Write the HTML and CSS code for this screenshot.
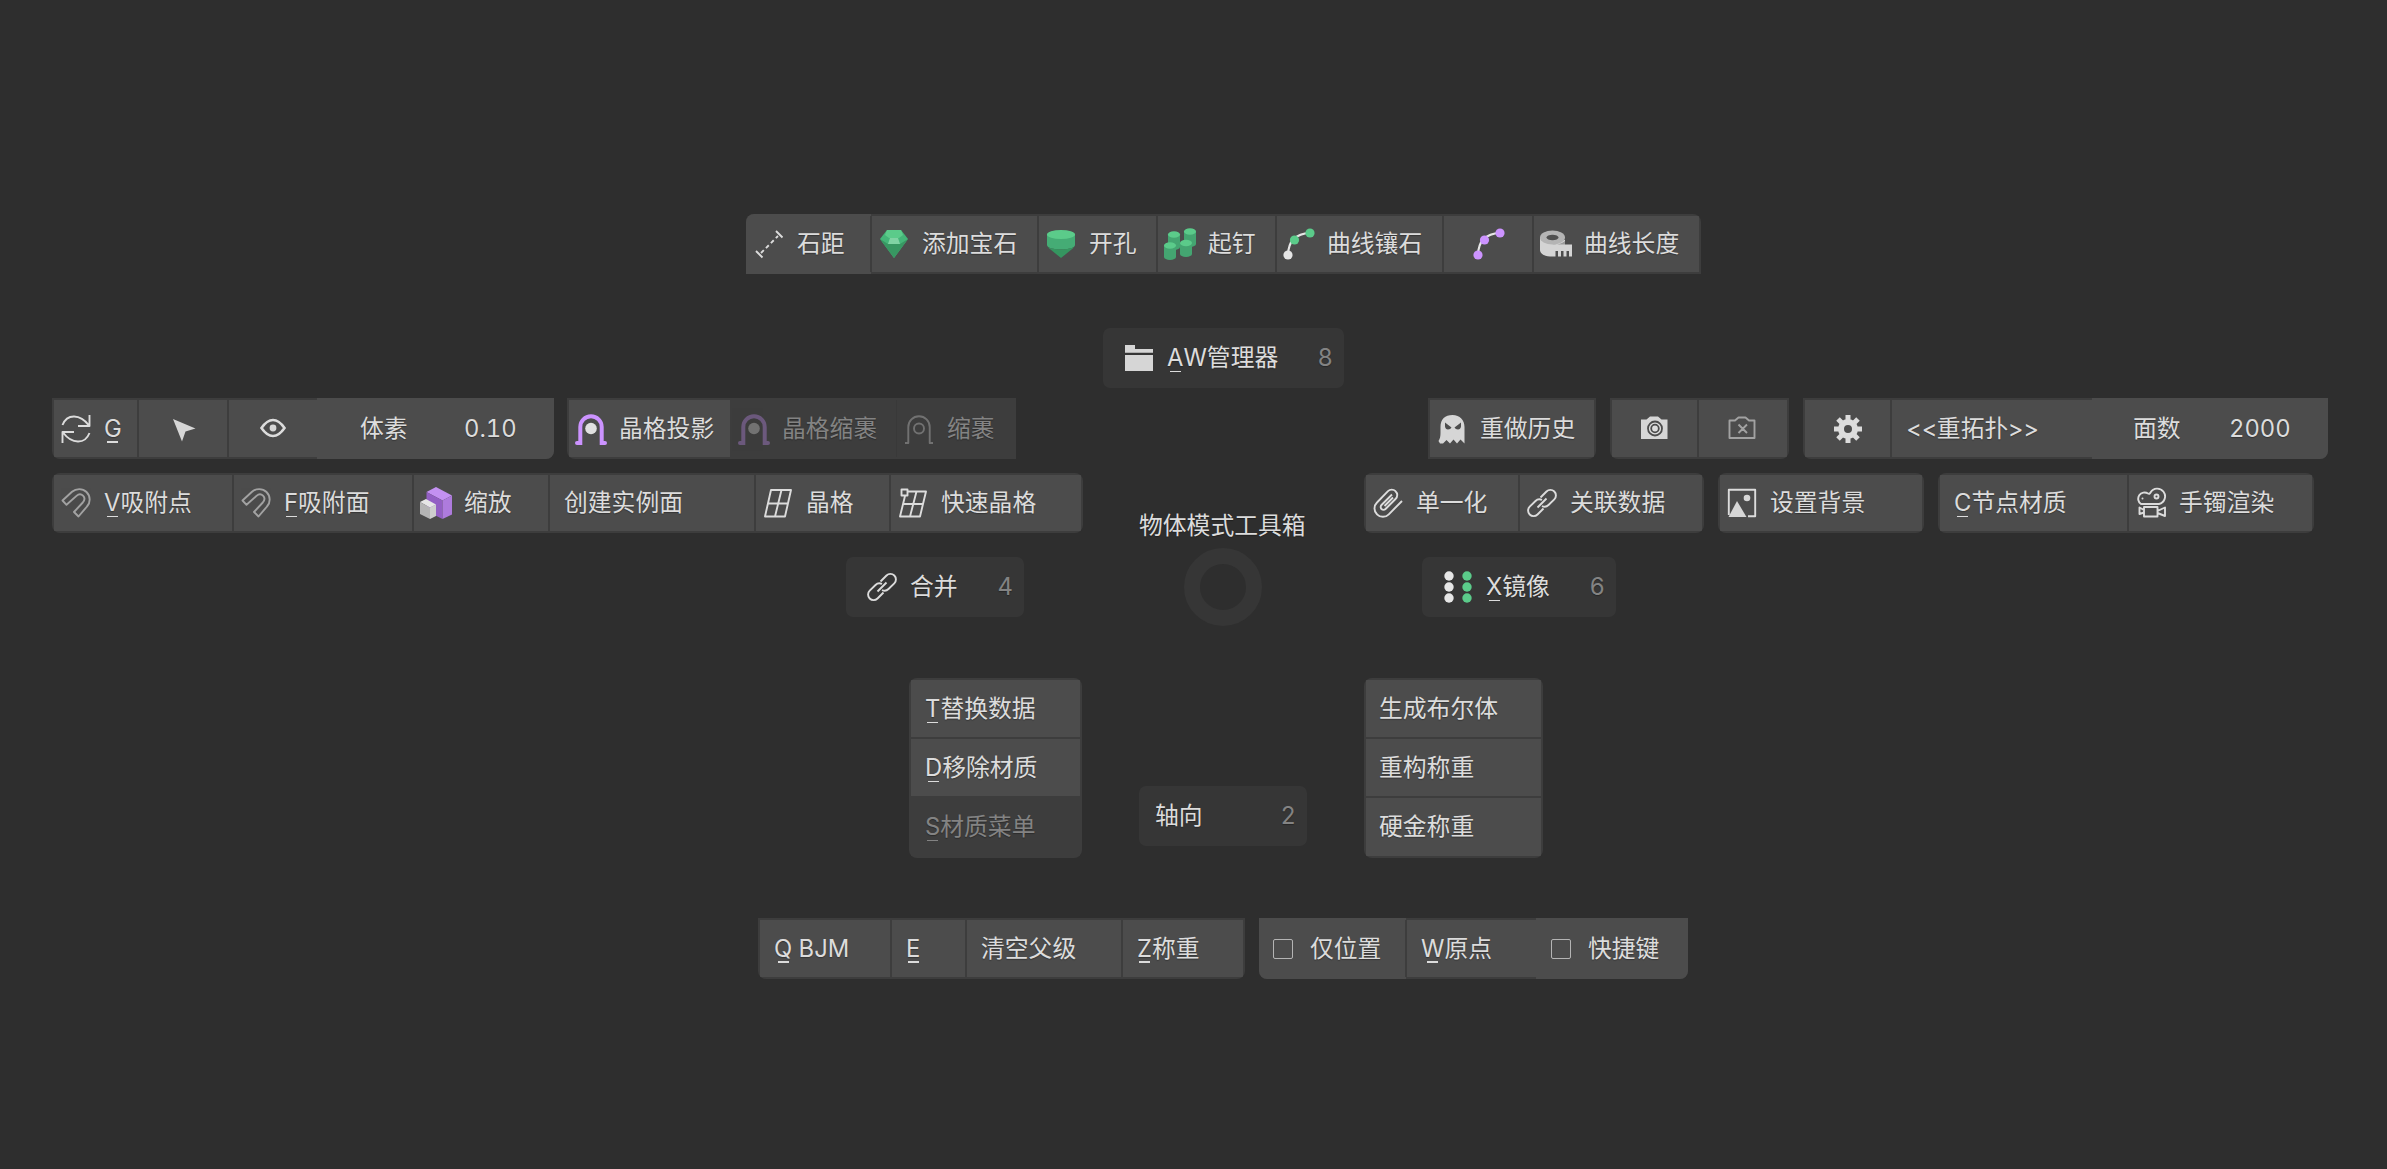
FILE: index.html
```html
<!DOCTYPE html>
<html lang="zh-CN">
<head>
<meta charset="utf-8">
<title>物体模式工具箱</title>
<link rel="stylesheet" href="styles.css">
</head>
<body>
<svg class="defs" width="0" height="0" aria-hidden="true">
  <symbol id="arch" viewBox="0 0 32 32"><path d="M2 30H5.3V14a10.7 10.7 0 0 1 21.400 0V30H30"/></symbol>
  <symbol id="magnet" viewBox="0 0 32 32"><path d="M2.500 13.500 12 4.800C16 1.300 22.500 1 26.500 5c4 4 4.200 10.500 .5 14.500L18.500 29.500 14 25l8.800-9.500c2-2.300 2-5 .2-6.800s-4.500-1.600-6.500.2L6.500 17.800Z"/></symbol>
  <symbol id="link" viewBox="0 0 32 32"><path d="M14.500 10.500 20.500 4.500a5.500 5.500 0 0 1 7.800 0a5.500 5.500 0 0 1 0 7.800L22.500 18a5.500 5.500 0 0 1-6.500 1M17.500 21.500 11.500 27.500a5.500 5.500 0 0 1-7.800 0a5.500 5.500 0 0 1 0-7.800L9.500 14a5.500 5.500 0 0 1 6.500-1M11.500 20.500 20.500 11.500"/></symbol>
</svg>

<main class="pie">
  <div class="row row-gems">
    <div class="bar bar-top">
      <div class="cell flush w-distance"><svg class="icon" viewBox="0 0 32 32"><path class="line" d="M3 23 9.500 29.500M23 3 29.500 9.500"/><path class="line" stroke-dasharray="4 3" d="M8 25 25 8"/></svg><span>石距</span></div>
      <div class="cell w-gem"><svg class="icon" viewBox="0 0 32 32"><path fill="#44b578" d="M9 2H23L30 11 16 30 2 11Z"/><path fill="#5bcb8a" d="M9 2H23L25 7 21 10H11L7 7Z"/><path fill="#389762" d="M2 11 10 16H22L30 11 16 30Z"/><path fill="#80d3a3" d="M12 10H20L22 16H10Z"/></svg><span>添加宝石</span></div>
      <div class="cell w-hole"><svg class="icon" viewBox="0 0 32 32"><path fill="#45ac75" d="M2 6H30V17C30 23 2 23 2 17Z"/><path fill="#359660" d="M3 19.500Q16 23.500 29 19.500L16 30Z"/><ellipse cx="16" cy="6.500" rx="14" ry="4.500" fill="#5bcb8a"/></svg><span>开孔</span></div>
      <div class="cell w-prong"><svg class="icon" viewBox="0 0 32 32"><g fill="#44a571"><path d="M20 3H32V16a6 3 0 0 1-12 0ZM4 6H16V19a6 3 0 0 1-12 0Z"/><path d="M16 15H28V26a6 3 0 0 1-12 0ZM0 17H12V29a6 3 0 0 1-12 0Z"/></g><g fill="#5bcb8a"><ellipse cx="26" cy="3.500" rx="6" ry="3.300"/><ellipse cx="10" cy="6.500" rx="6" ry="3.300"/><ellipse cx="22" cy="15" rx="6" ry="3.300"/><ellipse cx="6" cy="17.500" rx="6" ry="3.300"/></g></svg><span>起钉</span></div>
      <div class="cell w-curve-gem"><svg class="icon" viewBox="0 0 32 32"><path class="curve" d="M5 27Q5.500 6 27 5"/><circle cx="5" cy="27" r="4.600" fill="#e6e6e6"/><circle cx="11.500" cy="12" r="4.600" fill="#5bcb8a"/><circle cx="27" cy="5" r="4.600" fill="#5bcb8a"/></svg><span>曲线镶石</span></div>
      <div class="cell solo w-curve"><svg class="icon" viewBox="0 0 32 32"><path class="curve" d="M5 27Q5.500 6 27 5"/><g fill="#cc93ff"><circle cx="5" cy="27" r="4.600"/><circle cx="11.500" cy="12" r="4.600"/><circle cx="27" cy="5" r="4.600"/></g></svg></div>
      <div class="cell w-length"><svg class="icon" viewBox="0 0 32 32"><path fill="#d4d4d4" d="M0 9 25 12V16.500H32V28.500H29V23H26.500V28.500H23.500V23H21V28.500H18V23H15.500V28.500H10C4 28.500 0 25 0 22Z"/><path fill="#9b9b9b" d="M12 17Q20 17 25 13V16.500H14Z"/><ellipse cx="12.500" cy="9.500" rx="12.500" ry="7" fill="#b4b4b4"/><ellipse cx="12.500" cy="9.500" rx="6" ry="2.800" fill="#505050"/></svg><span>曲线长度</span></div>
    </div>
  </div>

  <div class="row row-manager">
    <div class="item w-manager"><svg class="icon" viewBox="0 0 32 32"><path class="solid" d="M2 3H12V7H30V10.800H2ZM2 13H30V29H2Z"/></svg><span><u>A</u>W管理器</span><b>8</b></div>
  </div>

  <div class="row row-upper">
    <div class="bar bar-bottom bar-voxel">
      <div class="cell w-g"><svg class="icon" viewBox="0 0 32 32"><path class="line" d="M2.500 12C7 .5 20 .5 29 12.500M29.500 2V13H18M29.500 20C25 31.500 12 31.500 3 19.500M2.500 30V19H14"/></svg><span><u>G</u></span></div>
      <div class="cell solo w-pointer"><svg class="icon" viewBox="0 0 32 32"><path class="solid" d="M5 6 27.500 15.500 17.500 18.500 14 28.500Z"/></svg></div>
      <div class="cell solo w-eye"><svg class="icon" viewBox="0 0 32 32"><path fill="none" stroke="#dcdcdc" stroke-width="2.600" d="M4.500 15Q10 7 16 7T27.500 15Q22 23 16 23T4.500 15Z"/><circle class="solid" cx="16" cy="15" r="3.400"/></svg></div>
      <div class="cell flush slider w-voxel"><span>体素</span><span>0.10</span></div>
    </div>
    <div class="bar bar-lattice">
      <div class="cell w-project"><svg class="icon thick"><use href="#arch"/><circle cx="16" cy="15.500" r="5.800" fill="#e0e0e0" stroke="none"/></svg><span>晶格投影</span></div>
      <div class="cell off w-lattice-wrap"><svg class="icon thick"><use href="#arch"/><circle cx="16" cy="15.500" r="5.800" fill="#e0e0e0" stroke="none"/></svg><span>晶格缩裹</span></div>
      <div class="cell off w-wrap"><svg class="icon line"><use href="#arch"/><circle cx="16" cy="15.500" r="5"/></svg><span>缩裹</span></div>
    </div>
    <div class="bar bar-history">
      <div class="cell w-history"><svg class="icon" viewBox="0 0 32 32"><path class="solid" fill-rule="evenodd" d="M4.500 14C4.500 6 9 2 16.500 2S28.500 7 28.500 14V30.500L24.500 26.500 21 30.500 17.500 26.500 14 30.500 10.500 27 7 30.500H4L2.500 28C4 26 4.500 23 4.500 20ZM9 9.500 15.500 14.500Q14.500 16.500 12 16.500T9 13.500ZM25 9.500 18.500 14.500Q19.500 16.500 22 16.500T25 13.500Z"/></svg><span>重做历史</span></div>
    </div>
    <div class="bar bar-bottom bar-camera">
      <div class="cell solo w-shot"><svg class="icon" viewBox="0 0 32 32"><path class="solid" d="M2 6.500H7.500L11 3.500H19L22.500 6.500H28.500V26H2Z"/><circle cx="16" cy="15.500" r="7" fill="#ddd" stroke="#4c4c4c" stroke-width="1.800"/><circle cx="16" cy="15.500" r="3.800" fill="#ddd" stroke="#4c4c4c" stroke-width="1.800"/></svg></div>
      <div class="cell solo w-noshot"><svg class="icon dim" viewBox="0 0 32 32"><path class="line" d="M2.500 7.500H8L11.500 4.500H18.500L22 7.500H27.500V25H2.500ZM11.500 11.500 20 20M20 11.500 11.500 20"/></svg></div>
    </div>
    <div class="bar bar-bottom bar-remesh">
      <div class="cell solo w-gear"><svg class="icon" viewBox="0 0 32 32"><path fill="none" stroke="#dcdcdc" stroke-width="5" d="M16 2V7M16 25V30M2 16H7M25 16H30M6 6 9.500 9.500M22.500 22.500 26 26M26 6 22.500 9.500M6 26 9.500 22.500"/><circle cx="16" cy="16" r="7" fill="none" stroke="#dcdcdc" stroke-width="6"/></svg></div>
      <div class="cell text w-remesh"><span>&lt;&lt;重拓扑&gt;&gt;</span></div>
      <div class="cell flush slider w-faces"><span>面数</span><span>2000</span></div>
    </div>
  </div>

  <div class="row row-lower">
    <div class="bar bar-snap">
      <div class="cell w-snap-point"><svg class="icon line dim"><use href="#magnet"/></svg><span><u>V</u>吸附点</span></div>
      <div class="cell w-snap-face"><svg class="icon line dim"><use href="#magnet"/></svg><span><u>F</u>吸附面</span></div>
      <div class="cell w-scale"><svg class="icon" viewBox="0 0 32 32"><path fill="#c391f1" d="M6.500 5 16 0 32 8.500 22.500 13.500Z"/><path fill="#935fc4" d="M6.500 5 22.500 13.500V32L6.500 24Z"/><path fill="#ae7bdd" d="M22.500 13.500 32 8.500V27.500L22.500 32Z"/><path fill="#e6e6e6" d="M0 15 6 12 16 17.500 10 20.500Z"/><path fill="#b5b5b5" d="M0 15 10 20.500V32L0 27Z"/><path fill="#cecece" d="M10 20.500 16 17.500V29L10 32Z"/></svg><span>缩放</span></div>
      <div class="cell text w-instance"><span>创建实例面</span></div>
      <div class="cell w-lattice"><svg class="icon" viewBox="0 0 32 32"><path class="line" d="M9 3H29L23 29.500H3ZM6 16.500H26M19.500 3 13 29.500"/></svg><span>晶格</span></div>
      <div class="cell w-quick"><svg class="icon" viewBox="0 0 32 32"><path class="line" d="M4.500 2.500H10.500V8.500H4.500ZM10.500 4.500H29L23 29.500H3L8 9M6 17H26M19.500 4.500 13 29.500"/></svg><span>快速晶格</span></div>
    </div>
    <h1>物体模式工具箱</h1>
    <div class="bar bar-data">
      <div class="cell w-unique"><svg class="icon" viewBox="0 0 32 32"><path class="line" d="M20 7.500 9.500 18a2.800 2.800 0 0 0 0 4a2.800 2.800 0 0 0 4 0L23.500 12a5.200 5.200 0 0 0 0-7.800a5.200 5.200 0 0 0-7.500 0L5 15.500a8.200 8.200 0 0 0 0 11.800a8.200 8.200 0 0 0 11.800 0L30 14M12.500 19 21 10.500"/></svg><span>单一化</span></div>
      <div class="cell w-linked"><svg class="icon line"><use href="#link"/></svg><span>关联数据</span></div>
    </div>
    <div class="bar bar-bg">
      <div class="cell w-bg"><svg class="icon" viewBox="0 0 32 32"><path class="line" d="M2.800 28V2.800H29.200V29.200H22"/><path class="solid" d="M2.500 30 11 14 20.500 30Z"/><circle class="solid" cx="21" cy="11" r="3.300"/></svg><span>设置背景</span></div>
    </div>
    <div class="bar bar-render">
      <div class="cell text w-node"><span><u>C</u>节点材质</span></div>
      <div class="cell w-render"><svg class="icon" viewBox="0 0 32 32"><path class="line" d="M6 17H24a7.800 7.800 0 1 0-8.500-11.500Q14.500 7.500 13 6.500A5.800 5.800 0 1 0 6 17ZM9 20H22.500V29.500H9ZM9 23 4.500 20.500V27L9 25.500M22.500 24 30 20.500V29L22.500 26"/><circle class="line" cx="21.500" cy="9.500" r="2"/><circle class="solid" cx="7.500" cy="11.500" r="1"/></svg><span>手镯渲染</span></div>
    </div>
  </div>

  <div class="row row-center">
    <div class="item w-merge"><svg class="icon line"><use href="#link"/></svg><span>合并</span><b>4</b></div>
    <div class="ring"></div>
    <div class="item w-mirror"><svg class="icon" viewBox="0 0 32 32"><g fill="#e6e6e6"><circle cx="7" cy="5" r="4.700"/><circle cx="7" cy="16" r="4.700"/><circle cx="7" cy="27" r="4.700"/></g><g fill="#5bcb8a"><circle cx="25" cy="5" r="4.700"/><circle cx="25" cy="16" r="4.700"/><circle cx="25" cy="27" r="4.700"/></g></svg><span><u>X</u>镜像</span><b>6</b></div>
  </div>

  <div class="row row-lists">
    <div class="bar list list-left">
      <div class="cell text"><span><u>T</u>替换数据</span></div>
      <div class="cell text"><span><u>D</u>移除材质</span></div>
      <div class="cell text off"><span><u>S</u>材质菜单</span></div>
    </div>
    <div class="item text w-axis"><span>轴向</span><b>2</b></div>
    <div class="bar list list-right">
      <div class="cell text"><span>生成布尔体</span></div>
      <div class="cell text"><span>重构称重</span></div>
      <div class="cell text"><span>硬金称重</span></div>
    </div>
  </div>

  <div class="row row-footer">
    <div class="bar bar-bottom bar-tools">
      <div class="cell text w-bjm"><span><u>Q</u> BJM</span></div>
      <div class="cell text w-e"><span><u>E</u></span></div>
      <div class="cell text w-clear"><span>清空父级</span></div>
      <div class="cell text w-weigh"><span><u>Z</u>称重</span></div>
    </div>
    <div class="bar bar-bottom bar-options">
      <div class="cell flush check w-position"><i></i><span>仅位置</span></div>
      <div class="cell text w-origin"><span><u>W</u>原点</span></div>
      <div class="cell flush check w-hotkey"><i></i><span>快捷键</span></div>
    </div>
  </div>
</main>
</body>
</html>
```
FILE: styles.css
```css
* { box-sizing: border-box; }

body {
  margin: 0;
  background: #2e2e2e;
  color: #dcdcdc;
  font: 400 23.8px/30px Inter, "Noto Sans CJK SC", sans-serif;
  font-variant-numeric: tabular-nums;
  text-shadow: 0 1px 1px rgba(0, 0, 0, .3);
}

.defs { position: absolute; }

.pie {
  display: flex;
  flex-direction: column;
  width: 2387px;
  height: 1169px;
  overflow: hidden;
}

.row { display: flex; flex: none; }
.row-gems { height: 60px; margin: 214px 0 0 746px; }
.row-manager { height: 60px; margin: 54px 0 0 1103px; }
.row-upper { height: 61px; margin: 10px 0 0 52px; }
.row-lower { height: 60px; margin: 14px 0 0 52px; }
.row-center { height: 60px; margin: 24px 0 0 846px; align-items: center; }
.row-lists { height: 180px; margin: 61px 0 0 909px; }
.row-footer { height: 61px; margin: 60px 0 0 758px; }

/* joined groups of buttons */
.bar {
  display: flex;
  flex: none;
  gap: 1px;
  padding: 2px;
  border-radius: 8px;
  background: #3d3d3d;
  overflow: hidden;
}
.bar-top { border-radius: 8px 8px 0 0; }
.bar-bottom { border-radius: 0 0 8px 8px; }
.bar-lattice { border-radius: 0 0 0 8px; margin-left: 13px; }
.bar-history { border-radius: 0 0 8px 0; margin-left: 412px; }
.bar-camera { margin-left: 14px; }
.bar-remesh { margin-left: 14px; }
.bar-data { margin-left: 57px; }
.bar-bg { margin-left: 14px; }
.bar-render { margin-left: 14px; }
.bar-options { margin-left: 14px; }
.list { flex-direction: column; }
.list-left { width: 173px; }
.list-right { width: 179px; margin-left: 57px; }

.cell {
  display: flex;
  flex: none;
  align-items: center;
  padding-left: 6px;
  background: #4c4c4c;
  white-space: nowrap;
}
.cell + .cell { box-shadow: -2px 0 #3d3d3d; }
.cell + .slider, .cell + .check { box-shadow: none; }
.list .cell + .cell { box-shadow: 0 -2px #3d3d3d; }
.cell.text { padding-left: 14px; }
.cell.solo { justify-content: center; padding: 0; }
.list .cell { flex: 1; }
.list-right .cell.text { padding-left: 13px; }
.cell.flush { margin: -2px 0; }
.cell.flush:first-child { margin-left: -2px; padding-left: 7px; }
.cell.flush:last-child { margin: -2px -2px -2px -1px; }
.cell.off { background: #3d3d3d; color: #838383; }
.bar:not(.list) .off + .off { box-shadow: -1px 0 #393939; }

.icon {
  flex: none;
  width: 32px;
  height: 32px;
  margin-right: 12px;
}
.solo .icon { margin: 0; }
.solid { fill: #d6d6d6; }
.line { fill: none; stroke: #dcdcdc; stroke-width: 1.9; stroke-linejoin: round; }
.dim { opacity: .6; }
.curve { fill: none; stroke: #e6e6e6; stroke-width: 2.2; }
.thick { fill: none; stroke: #cc93ff; stroke-width: 4; stroke-linecap: round; }
.off .icon { opacity: .33; }

/* shortcut letters */
u { position: relative; text-decoration: none; }
u::after {
  content: "";
  position: absolute;
  left: calc(50% - 5.500px);
  bottom: 0;
  width: 11px;
  height: 1.5px;
  background: #dcdcdc;
}
.off u::after { background: #838383; }

/* standalone pie entries */
.item {
  display: flex;
  flex: none;
  align-items: center;
  height: 60px;
  padding: 0 11px 0 20px;
  border-radius: 7px;
  background: #363636;
}
.item.text { padding-left: 16px; }
.item b {
  margin-left: auto;
  color: #838383;
  font-weight: 400;
}

h1 {
  margin: 38px 0 0 56px;
  width: 168px;
  font: inherit;
  white-space: nowrap;
}

.ring {
  flex: none;
  width: 78px;
  height: 78px;
  margin: 0 160px;
  border: 16px solid #363636;
  border-radius: 50%;
}

.check i {
  width: 20px;
  height: 20px;
  margin: 0 17px 0 7px;
  border: 1.5px solid #b4b4b4;
  border-radius: 2px;
}
.check:last-child i { margin-left: 9px; }

.slider span:first-child { width: 104px; margin-left: 37px; }
.w-faces span:first-child { width: 96px; margin-left: 35px; }

.w-distance { width: 125px; }
.w-gem { width: 166px; }
.w-hole { width: 118px; }
.w-prong { width: 118px; }
.w-curve-gem { width: 166px; }
.w-curve { width: 89px; }
.w-length { width: 165px; }

.w-manager { width: 241px; }
.w-merge { width: 178px; }
.w-mirror { width: 194px; }
.w-axis { width: 168px; margin: 108px 0 0 57px; }

.w-g { width: 84px; }
.w-pointer { width: 89px; }
.w-eye { width: 88px; }
.w-voxel { width: 237px; }
.w-project { width: 162px; }
.w-lattice-wrap { width: 164px; }
.w-wrap { width: 117px; }
.w-history { width: 164px; }
.w-shot { width: 86px; }
.w-noshot { width: 88px; }
.w-gear { width: 86px; }
.w-remesh { width: 200px; }
.w-faces { width: 236px; }

.w-snap-point { width: 179px; }
.w-snap-face { width: 179px; }
.w-scale { width: 135px; }
.w-instance { width: 205px; }
.w-lattice { width: 134px; }
.w-quick { width: 190px; }
.w-unique { width: 153px; }
.w-linked { width: 182px; }
.w-bg { width: 202px; }
.w-node { width: 188px; }
.w-render { width: 183px; }

.w-bjm { width: 131px; }
.w-e { width: 74px; }
.w-clear { width: 155px; }
.w-weigh { width: 120px; }
.w-position { width: 147px; }
.w-origin { width: 129px; }
.w-hotkey { width: 152px; }
```
